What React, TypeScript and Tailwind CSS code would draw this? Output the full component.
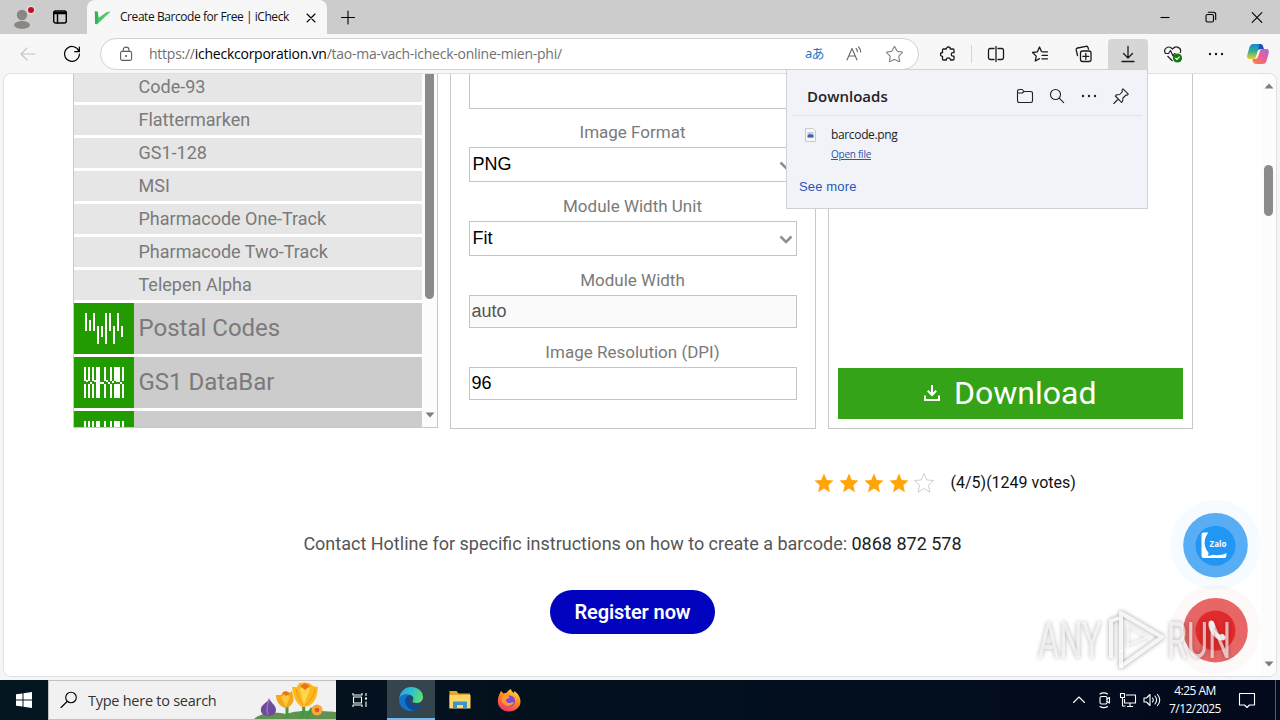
import type { ReactNode } from 'react'
import { Star } from 'lucide-react'

const codes = [
  'Code-93',
  'Flattermarken',
  'GS1-128',
  'MSI',
  'Pharmacode One-Track',
  'Pharmacode Two-Track',
  'Telepen Alpha',
]

const STAR =
  'M10 0l2.900 6.800 7.100.6-5.400 4.900 1.600 7.300L10 15.800l-6.200 3.800 1.600-7.300L0 7.400l7.100-.6z'

// Thin line icon, drawn in its own pixel grid
function Line({ size = 18, className = '', children }: { size?: number; className?: string; children: ReactNode }) {
  return (
    <svg
      width={size}
      height={size}
      viewBox={`0 0 ${size} ${size}`}
      fill="none"
      stroke="currentColor"
      strokeWidth="1.1"
      strokeLinecap="round"
      strokeLinejoin="round"
      className={`shrink-0 ${className}`}
    >
      {children}
    </svg>
  )
}

function Dots() {
  return (
    <Line>
      <g fill="currentColor" stroke="none">
        <circle cx="3" cy="9" r="1.2" />
        <circle cx="9" cy="9" r="1.2" />
        <circle cx="15" cy="9" r="1.2" />
      </g>
    </Line>
  )
}

function TabBar() {
  return (
    <div className="h-[34px] bg-[#cccccc] flex items-end shrink-0">
      <div className="w-[87px] h-full flex items-center">
        <svg width="26" height="28" viewBox="0 0 26 28" className="ml-[11px] -mt-[4px] shrink-0">
          <circle cx="11" cy="14" r="5.2" fill="#8a8683" />
          <ellipse cx="11" cy="24" rx="8" ry="3.900" fill="#8a8683" />
          <circle cx="20" cy="9" r="4.5" fill="#dcdcdc" />
          <circle cx="20" cy="9" r="3" fill="#c50f1f" />
        </svg>
        <Line size={16} className="ml-[15px] text-black">
          <rect x="1.7" y="2" width="12.6" height="12" rx="2" strokeWidth="1.4" />
          <path d="M2 3.5h12M2 4.5h12M5.5 5v9" strokeWidth="1.4" />
        </Line>
      </div>
      <div className="w-[240px] h-[34px] bg-[#f7f7f7] rounded-t-lg flex items-center">
        <svg width="17" height="16" viewBox="0 0 17 16" className="ml-[7px] shrink-0">
          <path d="M.8 2.2l3 .4.8 6.500L12.500 3.400l3.800-1L3 15.200 1 15z" fill="#2fb457" />
          <path d="M4.600 9.100L12.500 3.400l3.800-1L3 15.200z" fill="#54c66c" />
        </svg>
        <div className="ml-[9px] w-[172px] text-[12px] tracking-[-0.44px] text-[#111] whitespace-nowrap">
          Create Barcode for Free | iCheck
        </div>
        <Line size={14} className="ml-[12px] mt-px text-black">
          <path d="M3 3l8 8M11 3l-8 8" />
        </Line>
      </div>
      <div className="flex-1 h-full flex items-center text-black">
        <Line size={16} className="ml-[13px] -mt-px">
          <path d="M1.5 8.5h13M8 2v13" />
        </Line>
        <div className="ml-auto flex items-center gap-[30px] pr-[15px]">
          <Line size={16}>
            <path d="M3.5 8.5h9" strokeLinecap="butt" />
          </Line>
          <Line size={16}>
            <rect x="3" y="5.5" width="7.5" height="7.5" rx="1.5" />
            <path d="M5.300 3.3h5.2a2.2 2.2 0 012.2 2.2v5" />
          </Line>
          <Line size={16}>
            <path d="M3.2 3.7l9.6 9.6M12.8 3.7l-9.6 9.6" />
          </Line>
        </div>
      </div>
    </div>
  )
}

function Toolbar() {
  return (
    <div className="h-[39px] bg-[#f7f7f7] flex items-center pt-px shrink-0 text-[#1a1a1a]">
      <Line className="ml-[19px] text-[#c4c4c4]">
        <path d="M16 9H2M8 3L2 9l6 6" />
      </Line>
      <Line className="ml-[26px] text-black">
        <path d="M16 6.500A7.400 7.400 0 1 0 16.400 9M16.4 2v4.700h-4.700" strokeWidth="1.2" />
      </Line>
      <div className="ml-[19px] w-[819px] h-[32px] bg-white border border-[#d2d2d2] rounded-full flex items-center">
        <Line size={16} className="ml-[17px] text-[#5c5c5c]">
          <rect x="2.6" y="5.4" width="11" height="9" rx="1.6" />
          <path d="M5.2 5.4V4a2.9 2.9 0 015.8 0v1.4" />
          <circle cx="8.1" cy="10" r=".5" />
        </Line>
        <div className="ml-[15px] -mt-px w-[640px] text-[14px] tracking-[-0.25px] text-[#707070] whitespace-nowrap">
          https://<span className="text-black">icheckcorporation.vn</span>/tao-ma-vach-icheck-online-mien-phi/
        </div>
        <div className="ml-[16px] w-[20px] text-[13px] tracking-[-0.8px] text-[#1a79c9] font-['Noto_Sans','Noto_Sans_CJK_JP',sans-serif] whitespace-nowrap">
          aあ
        </div>
        <Line className="ml-[20px] text-[#666]">
          <path d="M2 15L7 3.5 12 15M3.8 11h6.4M11 3.5c1 .9 1.4 1.9 1.4 3.2M13.5 2c1.5 1.4 2.2 3 2.2 5" />
        </Line>
        <Star size={19} strokeWidth={1.3} className="ml-[22px] text-[#777]" />
      </div>
      <Line className="ml-[20px]">
        <path d="M4 4h3.300a2 2 0 014 0H14a1 1 0 011 1v2.700h-1a1.700 1.700 0 000 3.500h1V14a1 1 0 01-1 1h-2.500a2.100 2.100 0 00-4.200 0H4.500a1 1 0 01-1-1v-2.500a2 2 0 010-4V5z" strokeWidth="1.3" />
      </Line>
      <div className="ml-[14px] w-px h-[18px] bg-[#d5d5d5]" />
      <Line className="ml-[15px]">
        <path d="M7 3.5H3.2a1.7 1.7 0 00-1.7 1.7v7.6a1.7 1.7 0 001.7 1.7H7M11 3.5h3.8a1.7 1.7 0 011.7 1.7v7.6a1.7 1.7 0 01-1.7 1.7H11M9 1.5v15" strokeWidth="1.3" />
      </Line>
      <Line className="ml-[26px]">
        <path d="M10.500 6.500L8.500 2 6.300 6.900l-4.800.6 3.700 3.600L4.300 16l4.200-2.400M11.500 6.800h5M11 10.3h5.5M11 13.8h5.5" strokeWidth="1.3" />
      </Line>
      <Line size={20} className="ml-[25px]">
        <rect x="6.5" y="7" width="10.5" height="10.5" rx="2" strokeWidth="1.3" />
        <path d="M11.8 9.3v6M8.8 12.3h6M14.5 5.2l-.5-1.700a1.7 1.7 0 00-2-1.2L3.5 4A1.7 1.7 0 002.200 6l1.300 5.500" strokeWidth="1.3" />
      </Line>
      <div className="ml-[14px] w-[40px] h-[31px] bg-[#d6d6d6] rounded-t flex items-center justify-center">
        <Line>
          <path d="M9 1.500v11M4.500 8.500L9 13l4.500-4.500M3 16.500h12" strokeWidth="1.300" />
        </Line>
      </div>
      <svg width="20" height="20" viewBox="0 0 20 20" fill="none" className="ml-[15px] shrink-0">
        <path
          d="M2.500 9.500C-.500 5 5.500.500 9.500 5c4-4.500 10-.500 7.500 4M4.500 12l5 5M2 9.500h3.500l2-3 2.500 5.500 1.500-2.500h1"
          stroke="#222"
          strokeWidth="1.200"
          strokeLinejoin="round"
        />
        <circle cx="14.500" cy="14" r="4.600" fill="#107c10" />
        <path d="M12.400 14l1.500 1.500 2.700-2.900" stroke="#fff" strokeWidth="1.200" />
      </svg>
      <div className="ml-[24px]">
        <Dots />
      </div>
      <CopilotLogo />
    </div>
  )
}

function CopilotLogo() {
  return (
    <svg width="24" height="24" viewBox="0 0 24 24" className="ml-[21px] shrink-0">
      <defs>
        <linearGradient id="copA" x1="0" y1="0" x2="0" y2="1">
          <stop offset="0" stopColor="#1687d9" />
          <stop offset=".5" stopColor="#35b08d" />
          <stop offset="1" stopColor="#f1cf27" />
        </linearGradient>
        <linearGradient id="copB" x1="1" y1="0" x2="0" y2="1">
          <stop offset="0" stopColor="#a86ae8" />
          <stop offset=".5" stopColor="#ef5d8c" />
          <stop offset="1" stopColor="#fb8b3f" />
        </linearGradient>
      </defs>
      <path d="M7.500 2h6.500c2 0 2.700 1.200 3.200 3l.6 2h-3c-2 0-2.800 1-3.300 2.700L9.800 15c-.5 1.700-1.200 2-2.800 2H4c-2.800 0-3.300-1.800-2.600-4.500l2-7C4.200 3 5.200 2 7.500 2z" fill="url(#copA)" />
      <path d="M13 2h1c2 0 2.700 1.200 3.200 3l.6 2h-3c-1 0-1.800.4-2.300 1z" fill="#1b51ba" />
      <path d="M16.500 22H10c-2 0-2.700-1.200-3.200-3l-.6-2h2.500c2 0 3-1 3.500-2.700L14 9c.5-1.700 1.400-2 3-2h3c2.800 0 3.300 1.800 2.600 4.500l-2 7c-.7 2.500-1.800 3.500-4.100 3.500z" fill="url(#copB)" />
    </svg>
  )
}

function DownloadsFlyout() {
  return (
    <div className="absolute left-[786px] top-[69px] w-[362px] h-[140px] bg-[#f1f3f8] border border-[#cfd1d6] text-[#222]">
      <div className="mx-[5px] h-[46px] border-b border-[#e1e3e9] flex items-center pt-[6px] pl-[15px]">
        <div className="w-[207px] pt-[2px] text-[15px] font-semibold tracking-[0.02px]">Downloads</div>
        <div className="flex items-center gap-[14px]">
          <Line className="ml-[2px]">
            <path d="M1.500 5V4.200a1.700 1.700 0 011.700-1.700h3L8 4.500h6.800a1.700 1.700 0 011.700 1.700v7.600a1.700 1.700 0 01-1.700 1.700H3.200a1.700 1.700 0 01-1.700-1.700zM1.500 6h4.800L8 4.500" />
          </Line>
          <Line>
            <circle cx="7.500" cy="7.500" r="5" />
            <path d="M11.200 11.200l4.500 4.500" />
          </Line>
          <Dots />
          <Line>
            <path d="M11 1.800l5.300 5.300-1.100 1.100-1.200-.2-3 3-.4 3.300-1.100 1L3.300 9l1-1.100 3.400-.4 2.700-2.900-.4-1.600zM6.300 12L1.800 16.500" />
          </Line>
        </div>
      </div>
      <div className="flex mt-[9px] pl-[18px]">
        <svg width="11" height="14" viewBox="0 0 11 14" className="mt-[3px] shrink-0">
          <path d="M.5.500h7.500l2.500 2.500v10.500H.500z" fill="#f8f8f8" stroke="#c6cac4" />
          <rect x="2.500" y="4" width="6" height="5.500" fill="#b4ccf0" />
          <path d="M2.500 7.500l2-1.500 4 1v2.500h-6z" fill="#445fa6" />
        </svg>
        <div className="ml-[15px]">
          <div className="text-[12px] leading-[20px] tracking-[-0.35px]">barcode.png</div>
          <div className="text-[10px] leading-[18px] tracking-[-0.25px] text-[#3053a8] underline">Open file</div>
        </div>
      </div>
      <div className="mt-[13px] pl-[12px] text-[13px] leading-[22px] text-[#2b55b5] font-['Liberation_Sans',Arial,sans-serif] tracking-[0.15px]">
        See more
      </div>
    </div>
  )
}

function PostalIcon() {
  return (
    <svg width="40" height="32" viewBox="0 0 40 32" fill="#fff">
      <path d="M1 0h2v18H1zM5 7h2v11H5zM9 0h2v18H9zM13 13h2v18h-2zM17 13h2v11h-2zM21 0h2v31h-2zM25 0h2v18h-2zM29 13h2v18h-2zM33 0h2v18h-2zM37 13h2v11h-2z" />
    </svg>
  )
}

function DataBarIcon() {
  return (
    <svg width="40" height="32" viewBox="0 0 40 32" fill="#fff">
      <path d="M0 0h2v14H0zM4 0h2v14H4zM8 0h2v14H8zM12 0h4v14h-4zM20 0h2v14h-2zM26 0h2v14h-2zM30 0h6v14h-6zM38 0h2v14h-2z" />
      <path d="M0 17h2v14H0zM4 17h2v14H4zM8 17h2v14H8zM12 17h4v14h-4zM20 17h2v14h-2zM26 17h2v14h-2zM30 17h6v14h-6zM38 17h2v14h-2z" />
      <path d="M2 13h2v2H2zM6 15h2v2H6zM10 13h2v2h-2zM12 14h4v3h-4zM16 15h4v2h-4zM22 13h2v2h-2zM24 15h2v2h-2zM28 14h2v2h-2zM36 15h2v2h-2zM32 13h4v2h-4z" />
    </svg>
  )
}

function Group({ name, icon }: { name: string; icon: ReactNode }) {
  return (
    <div className="h-[51px] shrink-0 bg-[#cccccc] flex">
      <div className="w-[60px] bg-[#219b00] flex justify-center pt-[10px]">{icon}</div>
      <div className="pl-[4.5px] text-[24px] leading-[50px] text-[#7a7a7a]">{name}</div>
    </div>
  )
}

function CodeList() {
  return (
    <div className="w-[365px] h-[354px] border border-t-0 border-[#c8c8c8] flex overflow-hidden">
      <div className="w-[348px] flex flex-col gap-[3px] -mt-[2px]">
        {codes.map((code) => (
          <div key={code} className="h-[30px] shrink-0 bg-[#e6e6e6] pl-[64.5px] text-[18px] leading-[30px] text-[#7a7a7a]">
            {code}
          </div>
        ))}
        <Group name="Postal Codes" icon={<PostalIcon />} />
        <Group name="GS1 DataBar" icon={<DataBarIcon />} />
        <Group name="" icon={<DataBarIcon />} />
      </div>
      <div className="flex-1 bg-[#fcfcfc] flex flex-col items-center justify-between pb-[9px]">
        <div className="w-[9px] h-[225px] bg-[#8b8b8b] rounded-b-full" />
        <svg width="10" height="6" viewBox="0 0 10 6">
          <path d="M.5.500h9L5 5.500z" fill="#7d7d7d" />
        </svg>
      </div>
    </div>
  )
}

function Label({ children }: { children: ReactNode }) {
  return <div className="h-[39px] pt-[9px] pr-px text-[17px] leading-[30px] text-center text-[#7a7a7a]">{children}</div>
}

function Select({ value }: { value: string }) {
  return (
    <div className="h-[35px] border border-[#c4c4c4] pl-[2.5px] pr-[3px] flex items-center justify-between text-[18px] text-black font-['Liberation_Sans',Arial,sans-serif]">
      <span>{value}</span>
      <svg width="14" height="9" viewBox="0 0 14 9" fill="none" stroke="#8f8f8f" strokeWidth="2.500" className="mt-px">
        <path d="M1.500 1.500L7 7l5.500-5.500" />
      </svg>
    </div>
  )
}

function Settings() {
  return (
    <div className="ml-[12px] w-[366px] h-[355px] border border-t-0 border-[#c8c8c8] px-[18px]">
      <div className="h-[35px] border border-t-0 border-[#c4c4c4]" />
      <div className="-mt-px">
        <Label>Image Format</Label>
      </div>
      <Select value="PNG" />
      <Label>Module Width Unit</Label>
      <Select value="Fit" />
      <Label>Module Width</Label>
      <div className="h-[33px] border border-[#c4c4c4] bg-[#fafafa] pl-[1.5px] text-[18px] leading-[30px] text-[#545454] font-['Liberation_Sans',Arial,sans-serif]">
        auto
      </div>
      <Label>Image Resolution (DPI)</Label>
      <div className="h-[33px] border border-[#c4c4c4] pl-[1.5px] text-[18px] leading-[30px] text-black font-['Liberation_Sans',Arial,sans-serif]">
        96
      </div>
    </div>
  )
}

function Preview() {
  return (
    <div className="ml-[12px] w-[365px] h-[355px] border border-t-0 border-[#c8c8c8] px-[9px] pb-[9px] flex flex-col justify-end">
      <div className="h-[51px] bg-[#34a318] text-white flex items-center pl-[85px]">
        <svg width="18" height="18" viewBox="0 0 18 18" fill="none" stroke="#fff" strokeWidth="2" className="-mt-px shrink-0">
          <path d="M9 1v9.500M4.800 6.800L9 11l4.200-4.200M2 11.500V16h14v-4.500" />
        </svg>
        <span className="ml-[13px] -mt-[2px] text-[32px] leading-[50px]">Download</span>
      </div>
    </div>
  )
}

function Rating() {
  return (
    <div className="ml-[810px] mt-[43px] h-[22px] flex items-center text-[16px] text-[#111]">
      <div className="flex gap-[5px] w-[136.5px]">
        {[1, 2, 3, 4, 5].map((n) => (
          <svg key={n} width="20" height="20" viewBox="-.5 -.5 21 21" className="shrink-0">
            <path d={STAR} fill={n <= 4 ? '#ffa50a' : '#fff'} stroke={n <= 4 ? 'none' : '#c0c0c0'} strokeWidth=".8" />
          </svg>
        ))}
      </div>
      (4/5)(1249 votes)
    </div>
  )
}

function ContactButtons() {
  return (
    <svg width="92" height="180" viewBox="0 0 92 180" className="absolute left-[1170px] top-[498px]">
      <circle cx="45.500" cy="47" r="45" fill="#2196f3" opacity=".04" />
      <circle cx="45.500" cy="132" r="45" fill="#e53935" opacity=".03" />
      <circle cx="45.500" cy="47.200" r="32.300" fill="#59adf5" />
      <circle cx="45.500" cy="47.700" r="20" fill="#2196f3" />
      <path d="M38.500 34.500h-4.800a2.200 2.200 0 00-2.200 2.200v21a2.200 2.200 0 002.200 2.200h20.500a2.200 2.200 0 002.200-2.200V55c-4 2-9 2.800-14 1.800-1.500.9-3.500 1.300-5 .8 1-1 1.300-2 1-3.200-5-5.600-5-14 .1-19.900z" fill="#fff" />
      <text x="39.500" y="48.700" fill="#fff" fontSize="8" fontWeight="700" className="font-['Open_Sans',sans-serif]">
        Zalo
      </text>
      <circle cx="45.500" cy="132.200" r="32.300" fill="#e76766" />
      <circle cx="45.500" cy="132.500" r="20" fill="#e12a2b" />
      <path d="M39 123.500c2-1.500 4-1 4.700.6l1.400 3.400c.5 1.300-1.300 1.900-.9 3 .9 2.300 3.300 4.800 5.500 6 1 .5 2.100-1 3.200-.4l2.300 1.800c1.400 1.200.5 3.500-1.600 4.400-7.500 1.500-17.500-11.500-14.600-18.800z" fill="#fff" />
    </svg>
  )
}

function Watermark() {
  return (
    <svg
      width="204"
      height="72"
      viewBox="0 0 204 72"
      className="absolute left-[1034px] top-[604px] overflow-visible drop-shadow-[0_0_2px_rgba(0,0,0,0.45)]"
    >
      <g fill="#fff" fillOpacity=".65" fontSize="50" className="font-[Roboto,sans-serif]">
        <text transform="translate(4 54) scale(.65 1)">ANY</text>
        <text transform="translate(133 54) scale(.65 1)">RUN</text>
      </g>
      <g fill="none" stroke="#fff" strokeOpacity=".85" strokeWidth="4" strokeLinejoin="round">
        <path d="M87 48V9l41 24-42 30" />
        <path d="M77 54V17l8-3M87 46v18" />
        <path d="M94 41V22l19 11.500z" strokeWidth="2" strokeOpacity=".5" />
      </g>
    </svg>
  )
}

function Page() {
  return (
    <div className="flex-1 bg-[#f3f5f8] px-[3px] pb-[3px] min-h-0">
      <div className="h-[604px] bg-white border border-[#dfdfdf] rounded-lg flex overflow-hidden font-[Roboto,sans-serif]">
        <div className="w-[1257px]">
          <div className="flex pl-[69px]">
            <CodeList />
            <Settings />
            <Preview />
          </div>
          <Rating />
          <div className="mt-[36px] text-center text-[18px] leading-[28px] text-[#555]">
            Contact Hotline for specific instructions on how to create a barcode: <span className="text-[#222]">0868 872 578</span>
          </div>
          <div className="mt-[32px] mx-auto w-[165px] h-[44px] rounded-full bg-[#0103bf] text-white text-[20px] leading-[44px] text-center font-semibold tracking-[-0.1px]">
            Register now
          </div>
        </div>
        <div className="flex-1 bg-[#fcfcfc] flex flex-col items-center pt-[9px] pb-[9px]">
          <svg width="10" height="6" viewBox="0 0 10 6">
            <path d="M.500 5.500h9L5 .500z" fill="#7d7d7d" />
          </svg>
          <div className="mt-[76px] w-[9px] h-[51px] rounded-full bg-[#8b8b8b]" />
          <svg width="10" height="6" viewBox="0 0 10 6" className="mt-auto">
            <path d="M.5.500h9L5 5.500z" fill="#7d7d7d" />
          </svg>
        </div>
      </div>
    </div>
  )
}

function Flowers() {
  return (
    <svg width="82" height="38" viewBox="0 0 82 38" className="ml-auto shrink-0">
      <path d="M0 38c8-7 22-7 32-5 14-5 38-3 50-2v7z" fill="#5f9150" />
      <path d="M15 17c1 4 7 7 7 12 0 4-4 6-8 6s-8-3-7-7c0-5 7-6 8-11z" fill="#6d4a9b" />
      <path d="M15 19c-2 5-3 9-1 15" stroke="#9473bd" strokeWidth="1.500" fill="none" />
      <path d="M33 24v13M49 24c2 6 0 8-2 13M58 27l-6 10" stroke="#3f9b3d" strokeWidth="3" fill="none" />
      <path d="M22 14l5 0 3-4 4 3 4-3 1 4c2 6-1 12-8 13-6-2-9-7-9-13z" fill="#f6a51c" />
      <path d="M27 16l5 10 4-10-4-3z" fill="#fcc93a" />
      <path d="M28 12l4-2 4 2-4 3z" fill="#e8731a" />
      <path d="M38 6l5 0 2-4 5-.500 5 .5 4 3 5 1c-1 4 0 9-4 14-3 5-7 6-12 6-6-3-9-12-10-20z" fill="#fbb91f" />
      <path d="M46 8l4 16 6-16-5-4z" fill="#ffd84d" />
      <path d="M42 8c1 6 3 11 7 16M61 8c-1 6-4 11-9 16" stroke="#e9981a" strokeWidth="1" fill="none" />
      <path d="M46 5l5-3 5 3-5 4z" fill="#e8731a" />
      <circle cx="63" cy="29" r="5.500" fill="#f9a63a" />
      <circle cx="63" cy="29" r="2.300" fill="#d85c1a" />
    </svg>
  )
}

function EdgeLogo() {
  return (
    <svg width="24" height="24" viewBox="0 0 24 24">
      <defs>
        <linearGradient id="edgeA" x1="0" y1=".3" x2="1" y2=".5">
          <stop offset="0" stopColor="#2aa4e0" />
          <stop offset=".5" stopColor="#2ec0d0" />
          <stop offset="1" stopColor="#5fe06a" />
        </linearGradient>
      </defs>
      <path d="M.200 11.500C1 4.500 6 0 12 0c7 0 12 4.500 12 10 0 4-3 6-6.500 6-2.800 0-4.300-1-4-2 1.500-1.500 1.500-4.500-2-6C7 6.500 2 8 .200 11.500z" fill="url(#edgeA)" />
      <path d="M.100 12C1.500 8 7 6.500 11 8c-4 1-5.500 5-4.300 8.500C8 20.500 12 23 16 23.300 8 26-.800 20 .100 12z" fill="#1273c9" />
      <path d="M11.500 8C7 9 5.500 13 6.700 16.500 8.500 22 14.500 24.500 18.500 22.300c2-1.200 3.500-2.700 4.500-4.500-5 2.500-12 .7-12.500-4.300-.100-1.700 1-3 2-3.600z" fill="#0c4a9c" />
    </svg>
  )
}

function ExplorerLogo() {
  return (
    <svg width="22" height="20" viewBox="0 0 22 20">
      <path d="M.500 1h7l2 2.500h11.500V18H.500z" fill="#e9a62a" />
      <path d="M.500 5h21v13.500H.500z" fill="#ffd666" />
      <path d="M4 18.500v-7h14v7h-4v-3.500H8v3.500z" fill="#3a95cf" />
    </svg>
  )
}

function FirefoxLogo() {
  return (
    <svg width="24" height="24" viewBox="0 0 24 24">
      <defs>
        <linearGradient id="ffA" x1=".8" y1="0" x2=".3" y2="1">
          <stop offset="0" stopColor="#ffe14a" />
          <stop offset=".45" stopColor="#ff8a1f" />
          <stop offset="1" stopColor="#f0306a" />
        </linearGradient>
      </defs>
      <path d="M4 3l2.500 2.500L10 4.500c1-1.500 2-2.500 4-3.500 0 1.500 1 2.500 3 4l.5-2c3.500 2.500 6 6.500 6 10.500C23.500 19 18.500 23.500 12 23.500S.800 19 .800 13C.800 9 2.500 6 4 3z" fill="url(#ffA)" />
      <circle cx="12.500" cy="13" r="5.600" fill="#7a4bd6" />
      <path d="M5 8c2.500-1.500 5-.500 7 .500 1.500 1-1 2-2.500 2.500-1.500 2 .5 4 3 4 2 0 3.500-1 4.500-.500-1.500 3-5 4-8 3-4-1.500-5-5.500-4-9.500z" fill="#ff9a2a" />
    </svg>
  )
}

function Taskbar() {
  return (
    <div className="h-[40px] bg-gradient-to-r from-[#04161f] to-[#020a1c] flex items-center shrink-0 text-white font-['Open_Sans','Segoe_UI',sans-serif]">
      <div className="w-[48px] flex justify-center">
        <svg width="16" height="16" viewBox="0 0 16 16" fill="#fff">
          <path d="M0 2.300l6.500-.9v6.100H0zM7.500 1.200L16 0v7.500H7.500zM0 8.500h6.500v6.100L0 13.700zM7.500 8.500H16V16l-8.500-1.200z" />
        </svg>
      </div>
      <div className="w-[288px] h-[40px] bg-[#f1f1f1] border-y border-l border-[#c0c0c0] flex items-center text-[#333]">
        <Line size={20} className="ml-[10px] text-black">
          <circle cx="12" cy="7.500" r="5.300" />
          <path d="M8.200 11.500L2 17.500" />
        </Line>
        <span className="ml-[9px] pt-[2px] text-[14.500px] tracking-[-0.26px] whitespace-nowrap">Type here to search</span>
        <Flowers />
      </div>
      <div className="w-[51px] flex justify-center">
        <Line size={18} className="-ml-[4px]">
          <path d="M2 2v2h9V2M2 16v-2h9v2M2.500 6h8v6h-8zM15 2v3M15 10.500v5.500" strokeLinecap="butt" />
          <rect x="14" y="6.500" width="2" height="2" fill="currentColor" stroke="none" />
        </Line>
      </div>
      <div className="w-[48px] h-[40px] bg-[#34454e] border-b-2 border-[#76b9ed] flex items-center justify-center">
        <EdgeLogo />
      </div>
      <div className="w-[49px] flex justify-center">
        <ExplorerLogo />
      </div>
      <div className="w-[49px] flex justify-center">
        <FirefoxLogo />
      </div>
      <div className="ml-auto flex items-center">
        <Line size={14}>
          <path d="M1.500 9.500L7 4l5.500 5.500" />
        </Line>
        <Line size={18} className="ml-[9px]">
          <rect x="5" y="5.500" width="7" height="7.500" rx="1.500" />
          <path d="M12 8l2.500-1.500v5.500L12 10.500M5 3c2-1.500 5.500-1.500 7.500 0M5 15.500c2 1.500 5.500 1.500 7.500 0" />
        </Line>
        <Line size={18} className="ml-[6px]">
          <path d="M7 4h9.500v8H5.500V8M8 15.500h6M11 12v3.500M1.500 2.500h4v4h-4zM3.500 6.500v8.500h3" strokeLinecap="butt" />
        </Line>
        <Line size={18} className="ml-[6px]">
          <path d="M1 7h2.500L7 3.500v11L3.500 11H1zM9.500 7c.900 1.200.900 2.800 0 4M12 5c1.900 2.400 1.900 5.600 0 8M14.500 3.500c2.700 3.300 2.700 7.700 0 11" />
        </Line>
        <div className="ml-[2px] w-[64px] text-center text-[12px] leading-[18px] tracking-[-0.55px] whitespace-nowrap">
          <div>4:25 AM</div>
          <div>7/12/2025</div>
        </div>
        <Line size={18} className="ml-[11px]">
          <path d="M1.500 2.500h15v11.500h-5L9 16.500 6.500 14h-5z" />
        </Line>
        <div className="ml-[19px] mr-[4px] w-px h-[40px] bg-[#555d68]" />
      </div>
    </div>
  )
}

export default function App() {
  return (
    <div className="relative w-[1280px] h-[720px] overflow-hidden flex flex-col font-['Open_Sans','Segoe_UI',sans-serif]">
      <TabBar />
      <Toolbar />
      <Page />
      <Taskbar />
      <DownloadsFlyout />
      <ContactButtons />
      <Watermark />
    </div>
  )
}
